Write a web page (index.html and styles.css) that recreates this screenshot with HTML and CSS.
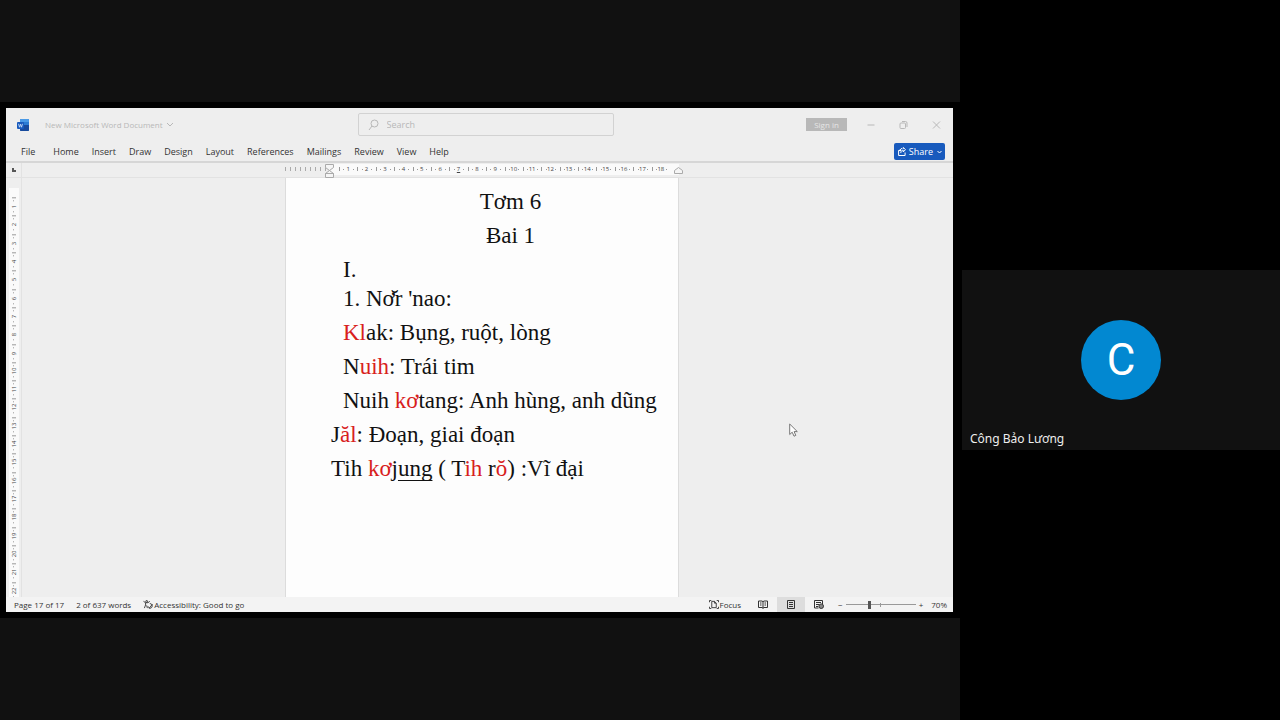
FILE: index.html
```html
<!DOCTYPE html>
<html lang="vi">
<head>
<meta charset="utf-8">
<title>New Microsoft Word Document</title>
<link rel="stylesheet" href="styles.css">
</head>
<body>
<main class="call">
  <section class="stage">
    <div class="share">
      <div class="word">
        <header class="titlebar">
          <div class="doc-name">
            <svg class="word-logo" viewBox="0 0 12 12" aria-hidden="true"><rect x="3" width="9" height="12" rx="1" fill="#2b7cd3"/><path d="M3 1a1 1 0 0 1 1-1h7a1 1 0 0 1 1 1v2H3z" fill="#4a9ae6"/><path d="M3 6h9v5a1 1 0 0 1-1 1H4a1 1 0 0 1-1-1z" fill="#174a9c"/><rect y="3" width="7" height="7" rx="1" fill="#185abd"/><path d="M1.5 4.8l1 3.4 1-3 1 3 1-3.4" fill="none" stroke="#d5e4f7" stroke-width=".8"/></svg>
            <span>New Microsoft Word Document</span>
            <svg class="chev" viewBox="0 0 8 5" aria-hidden="true"><path d="M1 1l3 3 3-3"/></svg>
          </div>
          <label class="search">
            <svg viewBox="0 0 11 12" aria-hidden="true"><circle cx="6.500" cy="4.500" r="3.500"/><path d="M4 7L1 11"/></svg>
            <input type="text" placeholder="Search" aria-label="Search">
          </label>
          <div class="win-controls">
            <button class="signin">Sign in</button>
            <button class="win" aria-label="Minimize"><svg viewBox="0 0 8 8"><path d="M1 4h7"/></svg></button>
            <button class="win" aria-label="Restore"><svg viewBox="0 0 8 8"><rect x=".5" y="2" width="5.500" height="5.500" rx="1"/><path d="M2.500 .5H6a1.500 1.500 0 0 1 1.500 1.500v4"/></svg></button>
            <button class="win" aria-label="Close"><svg viewBox="0 0 8 8"><path d="M.5 .5l7 7M7.500 .5l-7 7"/></svg></button>
          </div>
        </header>
        <nav class="menu">
          <button class="file">File</button><button>Home</button><button>Insert</button><button>Draw</button><button>Design</button><button>Layout</button><button>References</button><button>Mailings</button><button>Review</button><button>View</button><button>Help</button>
          <button class="share-btn"><svg viewBox="0 0 8 9" aria-hidden="true"><path d="M3 3.500H.6v5h6.500V5.500M.6 4L4 1.200M2.800 6c0-2 1-2.800 2.400-2.800V5l2.300-2.400L5.200.5v1.500"/></svg>Share<svg class="tiny" viewBox="0 0 5 4" aria-hidden="true"><path d="M.5 1l2 2 2-2"/></svg></button>
        </nav>
        <div class="ruler-row">
          <div class="corner"><svg viewBox="0 0 4 4" aria-hidden="true"><path d="M1 0v3h3"/></svg></div>
          <div class="ruler-track">
            <div class="ruler">
              <div class="margin-part"></div>
              <svg class="indent" viewBox="0 0 9 16" aria-hidden="true"><path d="M.5 1.500h8v3l-4 3-4-3zM.5 10.500l4-3 4 3zM.5 10.500h8v4h-8z"/></svg>
              <ol class="cells"><li>1</li><li>2</li><li>3</li><li>4</li><li>5</li><li>6</li><li class="tab-stop">7</li><li>8</li><li>9</li><li>10</li><li>11</li><li>12</li><li>13</li><li>14</li><li>15</li><li>16</li><li>17</li><li>18</li></ol>
              <svg class="right-indent" viewBox="0 0 9 7" aria-hidden="true"><path d="M.5 6.500v-3l4-3 4 3v3z"/></svg>
            </div>
          </div>
        </div>
        <div class="workspace">
          <div class="side-ruler">
            <ol class="v-cells"><li>1</li><li>2</li><li>3</li><li>4</li><li>5</li><li>6</li><li>7</li><li>8</li><li>9</li><li>10</li><li>11</li><li>12</li><li>13</li><li>14</li><li>15</li><li>16</li><li>17</li><li>18</li><li>19</li><li>20</li><li>21</li><li>22</li></ol>
          </div>
          <div class="canvas">
            <article class="page">
              <h1>Tơm 6</h1>
              <h2>Ƀai 1</h2>
              <p class="tight">I.</p>
              <p>1. Nơ̆r 'nao:</p>
              <p><em>Kl</em>ak: Bụng, ruột, lòng</p>
              <p>N<em>uih</em>: Trái tim</p>
              <p>Nuih <em>kơ</em>tang: Anh hùng, anh dũng</p>
              <p class="out">J<em>ăl</em>: Đoạn, giai đoạn</p>
              <p class="out">Tih <em>kơ</em>j<u>ung</u> ( T<em>ih</em> r<em>ŏ</em>) :Vĩ đại</p>
            </article>
          </div>
        </div>
        <footer class="status">
          <span>Page 17 of 17</span>
          <span>2 of 637 words</span>
          <span class="access"><svg viewBox="0 0 11 10" aria-hidden="true"><circle cx="4" cy="1.500" r="1"/><path d="M.5 1.500l2.300 1.500v2.500L1.500 9M7.500 1.500l-2 1.500H2.800M4 6l.8 3M5.500 7l1.500 2 3.500-4.500M7.500 4a2.500 2.500 0 0 1 2.500 3.500c-.5 1.500-2 2-3.500 1.500"/></svg>Accessibility: Good to go</span>
          <div class="views">
            <button class="focus"><svg viewBox="0 0 11 10" aria-hidden="true"><path d="M.5 2.500v-2h2M.5 7.500v2h2M8.500 .5h2v2M10.500 7.500v2h-2M3 1.500h3l2 2v5H3zM6 1.500v2h2"/></svg>Focus</button>
            <button class="view" aria-label="Read mode"><svg viewBox="0 0 10 9"><path d="M5 1.500v7M.5 1h3.500l1 .7 1-.7h3.500v6.500H6L5 8.200 4 7.500H.5zM2 3h1.500M2 5h1.500M6.500 3H8M6.500 5H8"/></svg></button>
            <button class="view on" aria-label="Print layout"><svg viewBox="0 0 10 9"><path d="M1.500 .5h7v8h-7zM3 2.500h4M3 4.500h4M3 6.500h4"/></svg></button>
            <button class="view" aria-label="Web layout"><svg viewBox="0 0 10 9"><path d="M4.500 8H.5V.5h8V4M2 2.500h5M2 4.500h3M2 6.500h2"/><circle cx="7.200" cy="6.200" r="2.300" fill="#888"/></svg></button>
            <div class="zoom">
              <button aria-label="Zoom out">−</button>
              <input type="range" min="0" max="100" value="34" aria-label="Zoom">
              <button aria-label="Zoom in">+</button>
              <span class="pct">70%</span>
            </div>
          </div>
        </footer>
      </div>
      <svg class="cursor" viewBox="0 0 9 14" aria-hidden="true"><path d="M.7 1v10.500l2.500-2.300 1.800 4 1.800-.8-1.700-3.800h3.200z"/></svg>
    </div>
  </section>
  <aside class="people">
    <figure class="tile">
      <div class="avatar">C</div>
      <figcaption>Công Bảo Lương</figcaption>
    </figure>
  </aside>
</main>
</body>
</html>
```
FILE: styles.css
```css
* { box-sizing: border-box; }
body { margin: 0; background: #000; font-family: "Noto Sans", "Open Sans", sans-serif; }
button { font: inherit; color: inherit; background: none; border: 0; padding: 0; white-space: nowrap; }
ol { list-style: none; margin: 0; padding: 0; }
svg { display: block; flex: none; fill: none; stroke: currentColor; stroke-width: 1; }

.call { display: grid; grid-template-columns: 3fr 1fr; min-height: 100vh; }
.stage { display: flex; align-items: center; background: #111; }
.share { position: relative; flex: 1; display: flex; aspect-ratio: 80 / 43; padding: 6px 7px 6px 6px; background: #000; }
.word { flex: 1; display: flex; flex-direction: column; min-width: 0; background: #eee; color: #333; font: 9px/12px "Open Sans", "Noto Sans", sans-serif; }

.titlebar { display: grid; grid-template-columns: 1fr 256px 1fr; align-items: center; height: 33px; padding: 0 11px; color: #b8b8b8; }
.doc-name { display: flex; align-items: center; gap: 3px; font-size: 8px; }
.word-logo { width: 12px; height: 12px; margin-right: 13px; stroke: none; }
.chev { width: 8px; height: 5px; }
.search { display: flex; align-items: center; gap: 8px; height: 23px; margin: 0 -6px 0 6px; padding: 0 9px; border: 1px solid #d2d2d2; border-radius: 2px; }
.search svg { width: 11px; height: 12px; }
.search input { flex: 1; min-width: 0; padding: 0; border: 0; background: none; font: inherit; outline: 0; }
.search input::placeholder { color: #b8b8b8; opacity: 1; }
.win-controls { display: flex; justify-content: flex-end; align-items: center; gap: 24px; padding-right: 1px; }
.signin { width: 41px; height: 13px; margin-right: -5px; background: #b8b8b8; color: #e6e6e6; font-size: 8px; line-height: 12px; }
.win svg { width: 9px; height: 8px; }

.menu { display: flex; align-items: center; gap: 13px; height: 22px; padding: 1px 8px 0 15px; border-bottom: 2px solid #d6d6d6; }
.menu > button { padding-top: 1px; }
.file { margin-right: 5px; }
.menu > .share-btn { display: flex; align-items: center; gap: 2px; height: 17px; margin-left: auto; padding: 0 3px 0 4px; border-radius: 2px; background: #185abd; color: #fff; }
.share-btn svg { width: 8px; height: 9px; margin-right: 1px; }
.share-btn .tiny { width: 5px; height: 4px; margin: 0 0 0 2px; }

.ruler-row { display: flex; height: 15px; border-bottom: 1px solid #e2e2e2; }
.corner { width: 16px; padding: 5px 6px; border-right: 1px solid #e2e2e2; }
.corner svg { width: 4px; height: 4px; color: #555; stroke-width: 2; }
.ruler-track { flex: 1; display: flex; justify-content: center; padding-right: 11px; }
.ruler { display: flex; align-items: center; position: relative; width: 394px; padding-bottom: 2px; font-size: 6px; line-height: 8px; color: #444; }
.margin-part { width: 45px; height: 4px; background: repeating-linear-gradient(90deg, #aaa 0 1px, transparent 1px 5px); }
.indent { position: absolute; left: 40px; top: 0; width: 9px; height: 16px; color: #aaa; fill: #f5f5f5; }
.cells { flex: 1; display: flex; height: 11px; padding: 0 9px; background: #fafafa; }
.cells li, .v-cells li { flex: 1; display: flex; align-items: center; justify-content: center; }
.cells li { background: linear-gradient(#999, #999) 0 50% / 1px 4px no-repeat, linear-gradient(#999, #999) 25% 50% / 1px 1px no-repeat, linear-gradient(#999, #999) 80% 50% / 1px 1px no-repeat; }
.cells .tab-stop { text-decoration: underline; }
.right-indent { position: absolute; right: -4px; bottom: 3px; width: 9px; height: 7px; color: #aaa; fill: #f5f5f5; }

.workspace { flex: 1; display: flex; min-height: 0; overflow: hidden; }
.side-ruler { display: flex; width: 16px; margin-bottom: -3px; padding: 10px 2px 0 3px; border-right: 1px solid #e2e2e2; font-size: 6px; line-height: 8px; color: #444; }
.v-cells { flex: 1; display: flex; flex-direction: column; padding-top: 9px; background: #fafafa; }
.v-cells li { writing-mode: vertical-rl; transform: rotate(180deg); background: linear-gradient(#999, #999) 50% 100% / 4px 1px no-repeat, linear-gradient(#999, #999) 50% 20% / 1px 1px no-repeat, linear-gradient(#999, #999) 50% 80% / 1px 1px no-repeat; }
.canvas { flex: 1; display: flex; justify-content: center; padding-right: 11px; }
.page { width: 394px; padding: 7px 0 0 57px; border: solid #dcdcdc; border-width: 0 1px; background: #fdfdfd; color: #111; font: 23px/34px "Liberation Serif", serif; white-space: nowrap; }
.page h1, .page h2, .page p { margin: 0; font: inherit; }
.page h1, .page h2 { text-align: center; }
.page .tight { margin-bottom: -5px; }
.page .out { margin-left: -12px; }
.page em { font-style: normal; color: #d8201c; }
.page u { text-decoration-thickness: 1px; text-underline-offset: 4px; text-decoration-skip-ink: none; }

.status { display: flex; align-items: center; gap: 12px; height: 15px; padding: 0 6px 0 8px; background: #f3f3f3; font-size: 8px; white-space: nowrap; }
.access, .focus { display: flex; align-items: center; gap: 1px; }
.status svg { width: 10px; height: 9px; }
.views { display: flex; align-items: center; align-self: stretch; margin-left: auto; }
.focus { margin-right: 8px; }
.view { display: flex; align-items: center; justify-content: center; width: 28px; height: 100%; }
.on { background: #ddd; }
.zoom { display: flex; align-items: center; gap: 3px; margin-left: 5px; }
.zoom input { appearance: none; width: 70px; height: 8px; margin: 0; background: linear-gradient(#999, #999) 50% 50% / 1px 4px no-repeat, linear-gradient(#999, #999) 50% 50% / 100% 1px no-repeat; }
.zoom input::-webkit-slider-thumb { appearance: none; width: 3px; height: 8px; background: #555; }
.pct { margin-left: 5px; }
.cursor { position: absolute; left: 82.200%; top: 62.200%; width: 9px; height: 14px; color: #777; fill: #fff; }

.people { display: flex; align-items: center; padding-left: 2px; background: #000; }
.tile { position: relative; flex: 1; display: flex; align-items: center; justify-content: center; height: 180px; margin: 0; background: #111; }
.avatar { display: flex; align-items: center; justify-content: center; width: 80px; height: 80px; border-radius: 50%; background: #0288d1; color: #fff; font: 44px/82px Roboto, sans-serif; }
.tile figcaption { position: absolute; left: 8px; bottom: 3px; color: #eee; font-size: 12px; line-height: 16px; }
```
